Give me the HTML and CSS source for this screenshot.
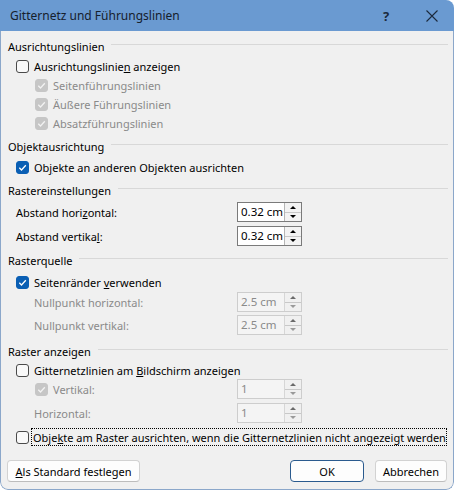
FILE: index.html
```html
<!DOCTYPE html>
<html lang="de">
<head>
<meta charset="utf-8">
<title>Gitternetz und Führungslinien</title>
<link rel="stylesheet" href="styles.css">
</head>
<body>
<div class="win">
  <div class="titlebar">
    <span class="title">Gitternetz und Führungslinien</span>
    <span class="tbtn help">?</span>
    <span class="tbtn close"><svg width="12" height="12" viewBox="0 0 12 12"><path d="M0.5 0.5 L11.5 11.5 M11.5 0.5 L0.5 11.5" stroke="#1b2a3d" stroke-width="1.1" fill="none"/></svg></span>
  </div>
  <div class="main">
    <div class="heading h1"><span>Ausrichtungslinien</span></div>
    <div class="row r20 ind1"><span class="box"></span><span class="txt">Ausrichtungslinie<u>n</u> anzeigen</span></div>
    <div class="row r19 ind2 dis"><span class="box dchk"><svg viewBox="0 0 13 13"><path d="M3.3 6.8 L5.5 9 L9.8 4.3" /></svg></span><span class="txt">Seitenführungslinien</span></div>
    <div class="row r19 ind2 dis"><span class="box dchk"><svg viewBox="0 0 13 13"><path d="M3.3 6.8 L5.5 9 L9.8 4.3" /></svg></span><span class="txt">Äußere Führungslinien</span></div>
    <div class="row r19 ind2 dis"><span class="box dchk"><svg viewBox="0 0 13 13"><path d="M3.3 6.8 L5.5 9 L9.8 4.3" /></svg></span><span class="txt">Absatzführungslinien</span></div>

    <div class="heading h2"><span>Objektausrichtung</span></div>
    <div class="row r20 ind1 cb5"><span class="box chk"><svg viewBox="0 0 13 13"><path d="M3.3 6.8 L5.5 9 L9.8 4.3" /></svg></span><span class="txt">Ob<u>j</u>ekte an anderen Objekten ausrichten</span></div>

    <div class="heading h3"><span>Rastereinstellungen</span></div>
    <div class="field f1"><span class="lbl">Abstand hori<u>z</u>ontal:</span>
      <div class="spin"><span class="val">0.32 cm</span><span class="arrows"><span class="up"></span><span class="dn"></span></span></div></div>
    <div class="field f2"><span class="lbl">Abstand vertika<u>l</u>:</span>
      <div class="spin"><span class="val">0.32 cm</span><span class="arrows"><span class="up"></span><span class="dn"></span></span></div></div>

    <div class="heading h4"><span>Rasterquelle</span></div>
    <div class="row r20 ind1 cb6"><span class="box chk"><svg viewBox="0 0 13 13"><path d="M3.3 6.8 L5.5 9 L9.8 4.3" /></svg></span><span class="txt">Seitenränder <u>v</u>erwenden</span></div>
    <div class="field f3 dis"><span class="lbl sub">Nullpunkt horizontal:</span>
      <div class="spin off"><span class="val">2.5 cm</span><span class="arrows"><span class="up"></span><span class="dn"></span></span></div></div>
    <div class="field f4 dis"><span class="lbl sub">Nullpunkt vertikal:</span>
      <div class="spin off"><span class="val">2.5 cm</span><span class="arrows"><span class="up"></span><span class="dn"></span></span></div></div>

    <div class="heading h5"><span>Raster anzeigen</span></div>
    <div class="row r18 ind1"><span class="box"></span><span class="txt">Gitternetzlinien am <u>B</u>ildschirm anzeigen</span></div>
    <div class="field f6 dis"><span class="lbl cbl"><span class="box dchk"><svg viewBox="0 0 13 13"><path d="M3.3 6.8 L5.5 9 L9.8 4.3" /></svg></span><span class="txt">Vertikal:</span></span>
      <div class="spin off"><span class="val">1</span><span class="arrows"><span class="up"></span><span class="dn"></span></span></div></div>
    <div class="field f7 dis"><span class="lbl sub">Horizontal:</span>
      <div class="spin off"><span class="val">1</span><span class="arrows"><span class="up"></span><span class="dn"></span></span></div></div>

    <div class="row r18 ind1 cb9"><span class="box"></span><span class="focus">Obje<u>k</u>te am Raster ausrichten, wenn die Gitternetzlinien nicht angezeigt werden</span></div>

    <div class="buttons">
      <button class="btn std"><u>A</u>ls Standard festlegen</button>
      <button class="btn ok">OK</button>
      <button class="btn cancel">Abbrechen</button>
    </div>
  </div>
</div>
</body>
</html>
```
FILE: styles.css
```css
html, body {
  margin: 0;
  padding: 0;
  background: #ffffff;
}
body {
  font-family: "Noto Sans", "Open Sans", "DejaVu Sans", sans-serif;
  font-size: 11px;
  color: #000;
}
.win {
  width: 454px;
  height: 490px;
  border-radius: 0 8px 8px 8px;
  overflow: hidden;
  display: flex;
  flex-direction: column;
}
.titlebar {
  height: 31px;
  flex: none;
  background: #6a9ad1;
  display: flex;
  align-items: center;
  padding-left: 10px;
  color: #16202c;
}
.title {
  flex: 1;
  font-size: 12px;
}
.tbtn {
  height: 31px;
  display: flex;
  align-items: center;
  justify-content: center;
}
.help {
  width: 46px;
  margin-right: 1px;
  font-weight: bold;
  font-size: 13px;
  color: #1b2a3d;
}
.close {
  width: 44px;
}
.main {
  flex: 1;
  background: #f0f0f0;
  border: 1px solid #8ba7ca;
  border-top: none;
  border-radius: 0 0 8px 8px;
  padding: 0 5px 0 7px;
  display: flex;
  flex-direction: column;
}
.heading {
  height: 20px;
  display: flex;
  align-items: center;
  gap: 7px;
  flex: none;
}
.heading::after {
  content: "";
  flex: 1;
  height: 1px;
  background: #d8d8d8;
  transform: translateY(-2px);
}
.h1 { margin-top: 5px; }
.h2 { margin-top: 3px; }
.h3 { margin-top: 3px; }
.h4 { margin-top: 4px; }
.h5 { margin-top: 6px; }

.row {
  display: flex;
  align-items: center;
  flex: none;
}
.r20 { height: 20px; }
.r19 { height: 19px; }
.r18 { height: 18px; }
.ind1 { padding-left: 8px; }
.ind2 { padding-left: 27px; }
.cb5 { margin-top: 1px; }
.cb6 { margin-top: 2px; }
.cb9 { margin-top: 5px; }

.box {
  width: 13px;
  height: 13px;
  box-sizing: border-box;
  border: 1px solid #4a4a4a;
  border-radius: 3px;
  background: #f9f9f9;
  flex: none;
  display: flex;
}
.box svg {
  width: 13px;
  height: 13px;
  margin: -1px;
}
.box svg path {
  fill: none;
  stroke: #fff;
  stroke-width: 1.3;
}
.box.chk {
  background: #0a5fb4;
  border-color: #0a5fb4;
}
.box.dchk {
  background: #c6c6c6;
  border-color: #c6c6c6;
}
.box.dchk svg path {
  stroke: #f2f2f2;
}
.txt {
  margin-left: 5px;
  white-space: nowrap;
}
.dis {
  color: #8a8a8a;
}

.field {
  height: 20px;
  display: flex;
  align-items: center;
  flex: none;
}
.f1 { margin-top: 2px; }
.f2 { margin-top: 4px; }
.f3 { margin-top: 0; }
.f4 { margin-top: 3px; }
.f6 { margin-top: 0; }
.f7 { margin-top: 4px; }
.lbl {
  width: 221px;
  padding-left: 8px;
  flex: none;
  white-space: nowrap;
}
.lbl.sub {
  width: 203px;
  padding-left: 26px;
}
.lbl.cbl {
  width: 202px;
  padding-left: 27px;
  display: flex;
  align-items: center;
}
.spin {
  width: 65px;
  height: 20px;
  box-sizing: border-box;
  border: 1px solid #7a7a7a;
  background: #fff;
  display: flex;
  color: #000;
}
.val {
  flex: 1;
  padding-left: 3px;
  line-height: 18px;
  white-space: nowrap;
  font-size: 11.5px;
}
.arrows {
  width: 16px;
  display: flex;
  flex-direction: column;
  border-left: 1px solid #b5b5b5;
  background: #f3f3f3;
}
.up, .dn {
  flex: 1;
  display: flex;
  align-items: center;
  justify-content: center;
  box-sizing: border-box;
}
.up {
  border-bottom: 1px solid #c8c8c8;
}
.up::before {
  content: "";
  border-left: 3px solid transparent;
  border-right: 3px solid transparent;
  border-bottom: 3px solid #000;
}
.dn::before {
  content: "";
  border-left: 3px solid transparent;
  border-right: 3px solid transparent;
  border-top: 3px solid #000;
}
.spin.off {
  border-color: #cdcdcd;
  background: #f4f4f4;
  color: #8a8a8a;
}
.spin.off .arrows {
  border-left-color: #d6d6d6;
  background: #f0f0f0;
}
.spin.off .up::before { border-bottom-color: #6a6a6a; }
.spin.off .dn::before { border-top-color: #9a9a9a; }

.focus {
  flex: 1;
  margin-left: 2px;
  margin-right: 1px;
  height: 18px;
  box-sizing: border-box;
  border: 1px dotted #000;
  padding-left: 1px;
  display: flex;
  align-items: center;
  white-space: nowrap;
  overflow: hidden;
}

.buttons {
  display: flex;
  margin-top: 14px;
  flex: none;
}
.btn {
  font-family: inherit;
  font-size: 11px;
  color: #000;
  height: 22px;
  box-sizing: border-box;
  background: #fdfdfd;
  border: 1px solid #d2d2d2;
  border-bottom-color: #bdbdbd;
  border-radius: 4px;
  padding: 0;
}
.std {
  width: 133px;
  margin-left: -1px;
}
.ok {
  width: 74px;
  margin-left: auto;
  border: 1px solid #2a5a8e;
}
.cancel {
  width: 72px;
  margin-left: 11px;
  margin-right: 1px;
}
```
